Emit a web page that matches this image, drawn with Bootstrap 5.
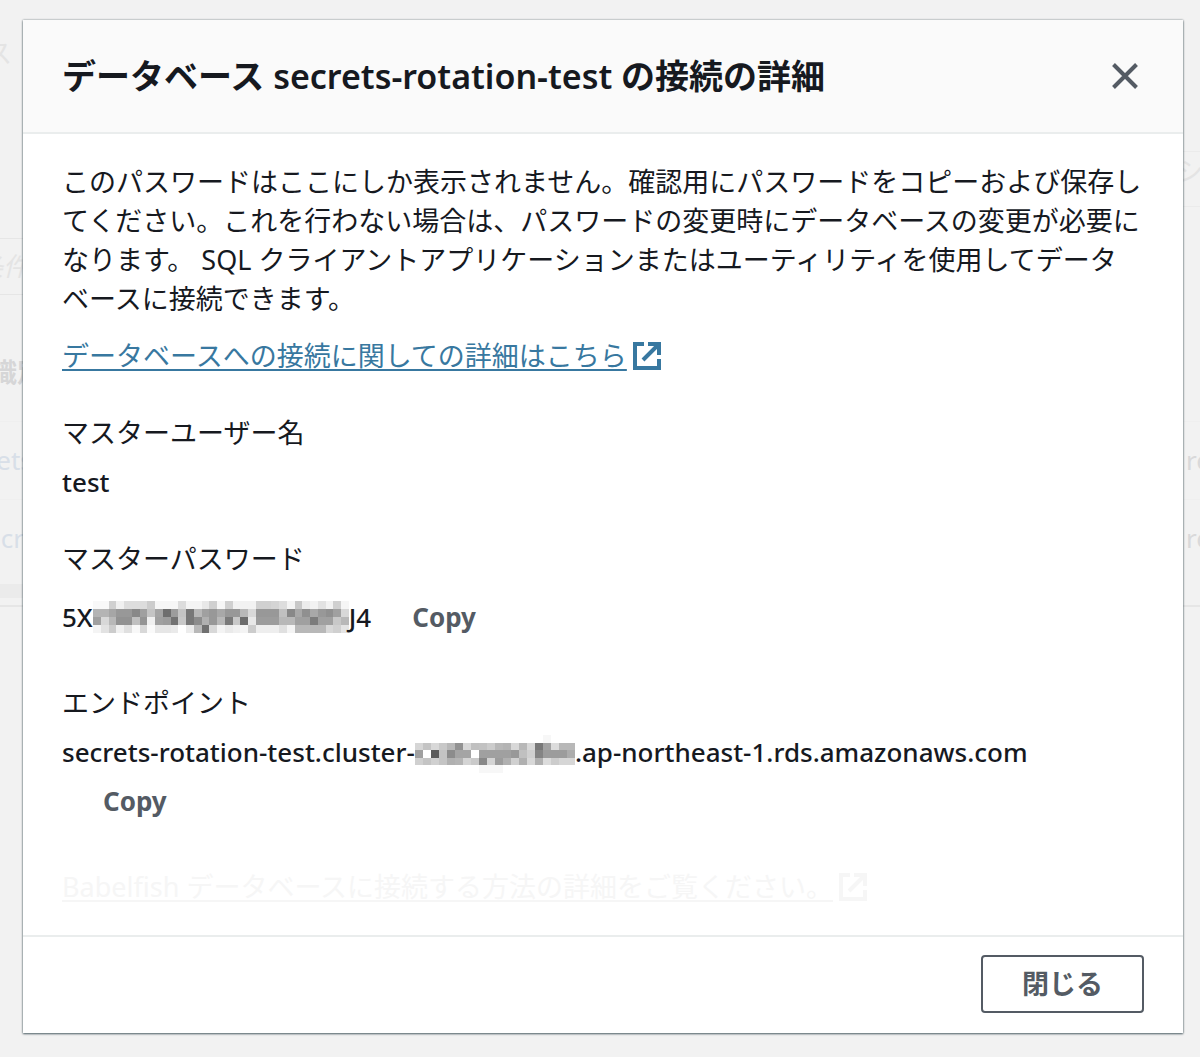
<!DOCTYPE html>
<html lang="ja">
<head>
<meta charset="utf-8">
<meta name="viewport" content="width=device-width, initial-scale=1">
<title>データベースの接続の詳細</title>
<link href="https://cdn.jsdelivr.net/npm/bootstrap@5.3.0/dist/css/bootstrap.min.css" rel="stylesheet">
<style>
  body {
    background: #f2f2f2;
    color: #16191f;
    font-family: "Noto Sans", "Noto Sans CJK JP", sans-serif;
    font-size: 27px;
    line-height: 39px;
  }
  .stage { min-height: 100vh; padding: 20px 17px 24px 23px; overflow: hidden; }

  /* dimmed page behind the dialog */
  .backpage { position: absolute; inset: 0; overflow: hidden; color: #d9d9da; font-size: 26px; }
  .back-title { height: 151px; padding-top: 34px; margin-left: -14px; color: #e4e4e4; }
  .back-tools { height: 56px; border: 1px solid #ebebeb; border-width: 1px 0; margin-left: 1160px; padding-left: 17px; color: #e4e4e4; }
  .back-search { width: 60%; height: 57px; margin-top: 31px; border: 1px solid #e6e6e6; border-width: 1px 0; color: #e4e4e4; font-style: italic; margin-left: -23px; }
  .back-head { height: 126px; padding-top: 58px; font-weight: 700; color: #d6d6d7; margin-left: -9px; }
  .back-row { height: 78px; border-top: 1px solid #efefef; }
  .back-row a { color: #d8dfe8; text-decoration: none; }
  .back-scroll { height: 14px; margin-top: 7px; width: 60%; background: #ebebeb; }
  .back-end { border-top: 2px solid #e6e6e6; margin-top: 7px; }
  .out-left { margin-left: -14px; }
  .out-right { margin-right: -11px; }

  .dialog-box {
    border: 0;
    border-radius: 0;
    color: inherit;
    box-shadow: 0 0 2px rgba(0, 28, 36, .4), 0 1px 2px rgba(0, 28, 36, .6);
  }
  .dialog-head { background: #fafafa; border-bottom: 2px solid #eaeded; border-radius: 0; padding: 32px 39px; }
  .dialog-head h1 { font-size: 34px; line-height: 48px; font-weight: 600; }
  .close-x { color: #545b64; line-height: 0; padding: 5px; }
  .dialog-main { padding: 28px 40px 29px 39px; }
  .intro { margin-bottom: 18px; }
  .doc-link { color: #3878a0; text-decoration: underline; text-underline-offset: 3px; text-decoration-thickness: 2px; }
  .doc-link svg { margin-left: 6px; vertical-align: -4px; }
  .faded .doc-link { color: #f6f6f6; }
  dl, dt, dd { margin: 0; }
  dt { font-weight: 400; }
  .pair { margin-top: 37px; }
  .pair dd { margin-top: 11px; font-size: 26px; font-weight: 500; }
  .pair:first-child { margin-top: 38px; }
  .faded { margin-top: 37px; }
  .copy-btn { color: #545b64; font-size: 26px; font-weight: 700; line-height: 38px; padding: 9px 41px 10px; border-radius: 2px; vertical-align: baseline; }
  #px-pass { vertical-align: -6px; }
  #px-host { vertical-align: -11px; }
  .dialog-foot { border-top: 2px solid #eaeded; border-radius: 0; padding: 18px 39px 20px; }
  .shut-btn { color: #545b64; border: 2px solid #545b64; border-radius: 4px; font-size: 27px; font-weight: 700; line-height: 38px; padding: 8px 39px; background: #fff; }
</style>
</head>
<body>
<div class="backpage" aria-hidden="true">
  <div class="back-title">ス</div>
  <div class="back-tools">シ</div>
  <div class="back-search d-flex align-items-center">条件</div>
  <div class="back-head">識別</div>
  <div class="back-row d-flex align-items-center justify-content-between"><a href="#" tabindex="-1" class="out-left">rets</a><span class="out-right">re</span></div>
  <div class="back-row d-flex align-items-center justify-content-between"><a href="#" tabindex="-1" class="out-left">ecr</a><span class="out-right">re</span></div>
  <div class="back-scroll"></div>
  <div class="back-end"></div>
</div>

<main class="stage position-relative">
  <div class="modal-content dialog-box bg-white" role="dialog" aria-labelledby="dlg-title">
    <div class="modal-header dialog-head d-flex justify-content-between align-items-center">
      <h1 class="m-0" id="dlg-title">データベース secrets-rotation-test の接続の詳細</h1>
      <button type="button" class="btn border-0 close-x" aria-label="閉じる">
        <svg width="28" height="28" viewBox="0 0 28 28" fill="none" stroke="currentColor" stroke-width="4"><path d="M2.5 2.5 25.5 25.5M25.5 2.5 2.5 25.5"/></svg>
      </button>
    </div>

    <div class="modal-body dialog-main">
      <p class="intro">このパスワードはここにしか表示されません。確認用にパスワードをコピーおよび保存してください。これを行わない場合は、パスワードの変更時にデータベースの変更が必要になります。 SQL クライアントアプリケーションまたはユーティリティを使用してデータベースに接続できます。</p>
      <div><a href="#" class="doc-link">データベースへの接続に関しての詳細はこちら<svg width="28" height="28" viewBox="0 0 28 28" fill="none" stroke="currentColor" stroke-width="4"><path d="M11 2H2v24h24V17M15 2h11v11M26 2 10 18"/></svg></a></div>
      <dl>
        <div class="pair"><dt>マスターユーザー名</dt><dd>test</dd></div>
        <div class="pair"><dt>マスターパスワード</dt><dd>5X<svg id="px-pass" width="256" height="32" role="img" aria-label="非表示"></svg>J4<button type="button" class="btn border-0 copy-btn">Copy</button></dd></div>
        <div class="pair"><dt>エンドポイント</dt><dd>secrets-rotation-test.cluster-<svg id="px-host" width="160" height="38" role="img" aria-label="非表示"></svg>.ap-northeast-1.rds.amazonaws.com <button type="button" class="btn border-0 copy-btn">Copy</button></dd></div>
      </dl>
      <div class="faded"><a href="#" class="doc-link">Babelfish データベースに接続する方法の詳細をご覧ください。<svg width="28" height="28" viewBox="0 0 28 28" fill="none" stroke="currentColor" stroke-width="4"><path d="M11 2H2v24h24V17M15 2h11v11M26 2 10 18"/></svg></a></div>
    </div>

    <div class="modal-footer dialog-foot d-flex justify-content-end">
      <button type="button" class="btn m-0 shut-btn">閉じる</button>
    </div>
  </div>
</main>

<script src="https://cdn.jsdelivr.net/npm/bootstrap@5.3.0/dist/js/bootstrap.bundle.min.js"></script>
<script>
  // each row lists one grey level (two hex digits) per mosaic cell
  function mosaic(id, cell, rows) {
    const svg = document.getElementById(id);
    svg.setAttribute('viewBox', '0 0 ' + rows[0].split(' ').length * cell + ' ' + rows.length * cell);
    svg.setAttribute('preserveAspectRatio', 'none');
    svg.setAttribute('shape-rendering', 'crispEdges');
    rows.forEach((row, y) => row.split(' ').forEach((g, x) => {
      const r = document.createElementNS('http://www.w3.org/2000/svg', 'rect');
      r.setAttribute('x', x * cell);
      r.setAttribute('y', y * cell);
      r.setAttribute('width', cell);
      r.setAttribute('height', cell);
      r.setAttribute('fill', '#' + g + g + g);
      svg.appendChild(r);
    }));
  }
  mosaic('px-pass', 8, [
    'f8 f8 d0 f0 dd dd dc cc f6 f6 f6 dc f4 f4 e8 d0 f6 d0 f2 f2 f2 d0 d0 d4 dd f4 c8 ec f2 e2 f2 d0 f6',
    'b4 b4 a6 98 98 88 a0 c4 a4 6e 9c c4 78 b8 a0 98 a8 98 98 b8 d8 98 98 98 c0 88 a8 90 a8 98 90 a0 d8',
    'a0 d8 b8 92 92 c0 94 f0 a0 9c 72 c8 78 8c b0 98 b8 7a c8 6c e8 9c 9c 9c b8 b8 a0 a0 7c a0 a0 c8 b8',
    'f4 e2 cc f0 e0 f8 d8 fa e6 e6 ea ff ec b8 70 d8 f4 ea f0 f4 cc ee ee ee e0 f4 b8 b8 b8 b8 d8 d0 e4'
  ]);
  mosaic('px-host', 8, [
    'ff ff ff ff ff ff ff ff ff ff ff ff ff ff ff ff f7 ff ff ff',
    'd6 c4 d8 c8 b8 92 d8 c0 c2 cc b8 b4 d8 b8 d8 78 a2 dc b8 b8',
    'a0 ff 5c c4 8c a4 a4 ff a0 a0 a0 a0 98 c0 d0 84 9c 9c 9c ac',
    'd0 c4 d0 c4 b0 b4 d4 ca 88 d4 9c b0 d0 b0 d8 b0 dc cc d6 d6',
    'ff ff ff ff ff ff ff ff f7 f7 f7 ff ff ff ff ff ff ff ff ff'
  ]);
</script>
</body>
</html>
